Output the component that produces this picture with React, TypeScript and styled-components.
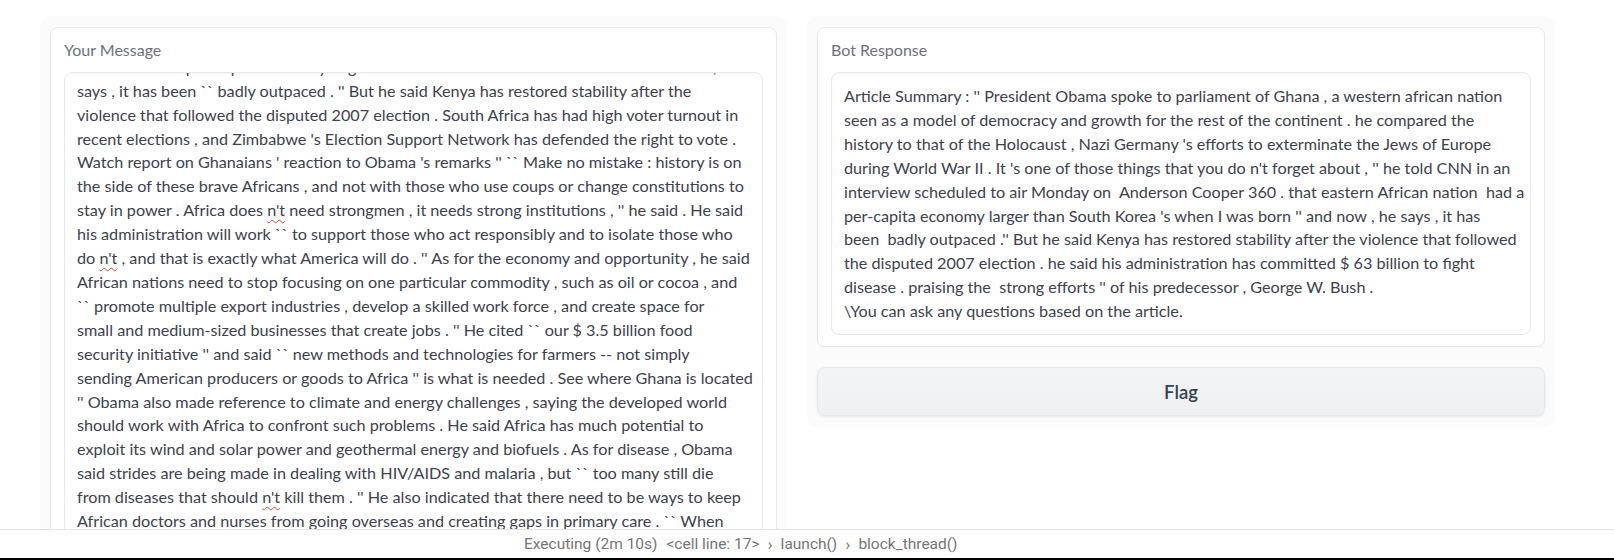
import React from 'react';
import styled, { createGlobalStyle } from 'styled-components';

const GlobalStyle = createGlobalStyle`
  html, body { margin: 0; padding: 0; background: #ffffff; }
  body { width: 1614px; height: 560px; overflow: hidden; font-family: Lato, "Noto Sans", sans-serif; }
  #root { height: 560px; }
`;

const Page = styled.div`
  height: 560px;
  display: flex;
  flex-direction: column;
`;

const Main = styled.main`
  flex: 1;
  min-height: 0;
  overflow: hidden;
  display: grid;
  grid-template-columns: 747px 748px;
  column-gap: 20px;
  align-items: start;
  padding: 16px 0 0 40px;
`;

const Column = styled.section`
  background: #fbfbfb;
  border-radius: 12px;
  padding: 11px 10px 12px;
  display: flex;
  flex-direction: column;
  gap: 20px;
`;

const Card = styled.div`
  background: #ffffff;
  border: 1px solid #e8e9ec;
  border-radius: 8px;
  padding: 12px 13px 11px;
  box-shadow: 0 1px 2px rgba(0, 0, 0, 0.03);
`;

const Label = styled.div`
  font-size: 16px;
  line-height: 20px;
  color: #6b7280;
  margin-bottom: 12px;
`;

const TextBox = styled.div<{ $scrolled?: boolean }>`
  border: 1px solid #e8e9ec;
  border-radius: 8px;
  padding: ${(p) => (p.$scrolled ? '0 12px' : '11px 12px')};
  height: ${(p) => (p.$scrolled ? '520px' : 'auto')};
  overflow: hidden;
  box-shadow: inset 0 1px 2px rgba(0, 0, 0, 0.04);
  color: #3b4250;
  font-size: 16.2px;
  line-height: 23.9px;
`;

const Scroller = styled.div`
  margin-top: -18.2px;
`;

const Line = styled.div`
  white-space: pre;
`;

const Typo = styled.span`
  text-decoration: underline wavy #e0463a;
  text-decoration-thickness: 1px;
  text-underline-offset: 3px;
`;

const FlagButton = styled.button`
  height: 49px;
  border: 1px solid #e6e7ea;
  border-radius: 8px;
  background: linear-gradient(to bottom, #f3f4f6, #eef0f2);
  font-family: Lato, "Noto Sans", sans-serif;
  font-size: 18.5px;
  font-weight: 600;
  color: #374151;
  box-shadow: 0 1px 3px rgba(0, 0, 0, 0.08);
  cursor: pointer;
`;

const StatusBar = styled.footer`
  height: 28px;
  border-top: 1px solid #e3e3e3;
  border-bottom: 2px solid #000000;
  background: #ffffff;
  display: flex;
  align-items: center;
  padding-left: 524px;
  font-family: Roboto, "Liberation Sans", sans-serif;
  font-size: 15.5px;
  line-height: 20px;
  color: #757575;
`;

const Crumb = styled.span<{ $gap?: number }>`
  white-space: pre;
  margin-right: ${(p) => p.$gap ?? 8}px;
`;

const Chevron = styled.span`
  font-size: 17px;
  line-height: 20px;
  color: #757575;
  margin-right: 8px;
`;

const leftLines = [
  "nation `` had a per-capita economy larger than South Korea 's when I was born '' and now , he",
  "says , it has been `` badly outpaced . '' But he said Kenya has restored stability after the",
  "violence that followed the disputed 2007 election . South Africa has had high voter turnout in",
  "recent elections , and Zimbabwe 's Election Support Network has defended the right to vote .",
  "Watch report on Ghanaians ' reaction to Obama 's remarks '' `` Make no mistake : history is on",
  "the side of these brave Africans , and not with those who use coups or change constitutions to",
  "stay in power . Africa does n't need strongmen , it needs strong institutions , '' he said . He said",
  "his administration will work `` to support those who act responsibly and to isolate those who",
  "do n't , and that is exactly what America will do . '' As for the economy and opportunity , he said",
  "African nations need to stop focusing on one particular commodity , such as oil or cocoa , and",
  "`` promote multiple export industries , develop a skilled work force , and create space for",
  "small and medium-sized businesses that create jobs . '' He cited `` our $ 3.5 billion food",
  "security initiative '' and said `` new methods and technologies for farmers -- not simply",
  "sending American producers or goods to Africa '' is what is needed . See where Ghana is located",
  "'' Obama also made reference to climate and energy challenges , saying the developed world",
  "should work with Africa to confront such problems . He said Africa has much potential to",
  "exploit its wind and solar power and geothermal energy and biofuels . As for disease , Obama",
  "said strides are being made in dealing with HIV/AIDS and malaria , but `` too many still die",
  "from diseases that should n't kill them . '' He also indicated that there need to be ways to keep",
  "African doctors and nurses from going overseas and creating gaps in primary care . `` When",
  "a parent loses a child because of a mosquito bite , we have an obligation to act .",
];

const rightLines = [
  "Article Summary : '' President Obama spoke to parliament of Ghana , a western african nation",
  "seen as a model of democracy and growth for the rest of the continent . he compared the",
  "history to that of the Holocaust , Nazi Germany 's efforts to exterminate the Jews of Europe",
  "during World War II . It 's one of those things that you do n't forget about , '' he told CNN in an",
  "interview scheduled to air Monday on  Anderson Cooper 360 . that eastern African nation  had a",
  "per-capita economy larger than South Korea 's when I was born '' and now , he says , it has",
  "been  badly outpaced .'' But he said Kenya has restored stability after the violence that followed",
  "the disputed 2007 election . he said his administration has committed $ 63 billion to fight",
  "disease . praising the  strong efforts '' of his predecessor , George W. Bush .",
  "\\You can ask any questions based on the article.",
];

function renderEditable(text: string) {
  const parts = text.split(" n't ");
  if (parts.length === 1) return text;
  return parts.map((p, i) => (
    <React.Fragment key={i}>
      {p}
      {i < parts.length - 1 && (
        <>
          {' '}
          <Typo>n't</Typo>{' '}
        </>
      )}
    </React.Fragment>
  ));
}

export default function App() {
  return (
    <Page>
      <GlobalStyle />
      <Main>
        <Column>
          <Card>
            <Label>Your Message</Label>
            <TextBox $scrolled>
              <Scroller>
                {leftLines.map((l, i) => (
                  <Line key={i}>{renderEditable(l)}</Line>
                ))}
              </Scroller>
            </TextBox>
          </Card>
        </Column>
        <Column>
          <Card>
            <Label>Bot Response</Label>
            <TextBox>
              {rightLines.map((l, i) => (
                <Line key={i}>{l}</Line>
              ))}
            </TextBox>
          </Card>
          <FlagButton>Flag</FlagButton>
        </Column>
      </Main>
      <StatusBar>
        <Crumb $gap={9}>Executing (2m 10s)</Crumb>
        <Crumb>{'<cell line: 17>'}</Crumb>
        <Chevron>›</Chevron>
        <Crumb>launch()</Crumb>
        <Chevron>›</Chevron>
        <Crumb>block_thread()</Crumb>
      </StatusBar>
    </Page>
  );
}
